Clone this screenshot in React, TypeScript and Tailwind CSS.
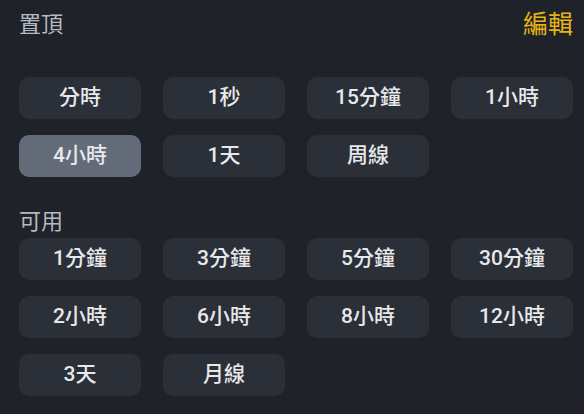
import React from "react";

const pinned = ["分時", "1秒", "15分鐘", "1小時", "4小時", "1天", "周線"];
const available = ["1分鐘", "3分鐘", "5分鐘", "30分鐘", "2小時", "6小時", "8小時", "12小時", "3天", "月線"];

function Btn({ label, active }: { label: string; active?: boolean }) {
  return (
    <div
      className={
        "h-[42px] rounded-[10px] flex items-center justify-center text-[21px] font-medium text-[#e6e8eb] " +
        (active ? "bg-[#646b78]" : "bg-[#2b2f37]")
      }
    >
      {label}
    </div>
  );
}

export default function App() {
  return (
    <div
      className="w-[584px] h-[414px] bg-[#1f2229] pl-[19px] pr-[11px] overflow-hidden"
      style={{ fontFamily: 'Roboto, "Noto Sans CJK TC", sans-serif' }}
    >
      <div className="h-[50px] flex items-center justify-between">
        <span className="text-[22px] text-[#b5b9c0] leading-[26px]">置頂</span>
        <span className="text-[25px] text-[#e8b413] leading-[26px]">編輯</span>
      </div>
      <div className="mt-[27px] grid grid-cols-[repeat(4,122px)] gap-x-[22px] gap-y-[16px]">
        {pinned.map((p) => (
          <Btn key={p} label={p} active={p === "4小時"} />
        ))}
      </div>
      <div className="mt-[32px] h-[26px] leading-[26px] text-[22px] text-[#b5b9c0]">可用</div>
      <div className="mt-[3px] grid grid-cols-[repeat(4,122px)] gap-x-[22px] gap-y-[16px]">
        {available.map((p) => (
          <Btn key={p} label={p} />
        ))}
      </div>
    </div>
  );
}
